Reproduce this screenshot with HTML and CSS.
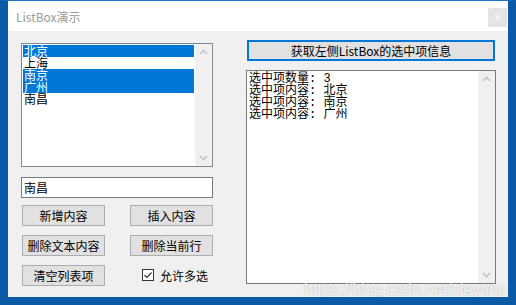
FILE: index.html
```html
<!DOCTYPE html>
<html lang="zh-cn">
<head>
    <meta charset="UTF-8">
    <meta name="viewport" content="width=device-width, initial-scale=1.0">
    <title>ListBox演示</title>
    <link rel="stylesheet" href="styles.css">
</head>
<body>
    <div class="window">
        <div class="titlebar">
            <span class="title">ListBox演示</span>
            <span class="close">x</span>
        </div>
        <div class="client">
            <div class="left">
                <div class="listbox">
                    <ul class="items">
                        <li class="sel">北京</li>
                        <li>上海</li>
                        <li class="sel">南京</li>
                        <li class="sel">广州</li>
                        <li>南昌</li>
                    </ul>
                    <div class="vscroll">
                        <svg width="17" height="17" viewBox="0 0 17 17"><polyline points="5,10 8.5,6.5 12,10" fill="none" stroke="#c2c2c2" stroke-width="1.6"/></svg>
                        <svg width="17" height="17" viewBox="0 0 17 17"><polyline points="5,7 8.5,10.5 12,7" fill="none" stroke="#c2c2c2" stroke-width="1.6"/></svg>
                    </div>
                </div>
                <div class="edit">南昌</div>
                <div class="btns">
                    <button class="btn">新增内容</button>
                    <button class="btn">插入内容</button>
                    <button class="btn">删除文本内容</button>
                    <button class="btn">删除当前行</button>
                    <button class="btn">清空列表项</button>
                    <label class="check">
                        <svg width="12" height="12" viewBox="0 0 12 12"><rect x="0.5" y="0.5" width="11" height="11" fill="#fff" stroke="#333"/><polyline points="2.5,6 5,8.5 9.5,3.5" fill="none" stroke="#333" stroke-width="1.2"/></svg>
                        <span>允许多选</span>
                    </label>
                </div>
            </div>
            <div class="right">
                <button class="btn btn-main">获取左侧ListBox的选中项信息</button>
                <div class="memo">
                    <div class="memo-text">
                        <div>选中项数量: 3</div>
                        <div>选中项内容: 北京</div>
                        <div>选中项内容: 南京</div>
                        <div>选中项内容: 广州</div>
                    </div>
                    <div class="vscroll">
                        <svg width="17" height="17" viewBox="0 0 17 17"><polyline points="5,10 8.5,6.5 12,10" fill="none" stroke="#c2c2c2" stroke-width="1.6"/></svg>
                        <svg width="17" height="17" viewBox="0 0 17 17"><polyline points="5,7 8.5,10.5 12,7" fill="none" stroke="#c2c2c2" stroke-width="1.6"/></svg>
                    </div>
                </div>
            </div>
        </div>
        <div class="watermark">https://blog.csdn.net/xieyunc</div>
    </div>
</body>
</html>
```
FILE: styles.css
```css
*{
    box-sizing: border-box;
}

body{
    margin: 0;
    font-family: "Noto Sans CJK SC", "Noto Sans", sans-serif;
    font-size: 12px;
}

.window{
    position: relative;
    width: 516px;
    height: 305px;
    border: 8px solid #0a5aa6;
    border-top: 1px solid #1c74c2;
    display: flex;
    flex-direction: column;
    overflow: hidden;
}

.titlebar{
    height: 30px;
    background-color: #fff;
    display: flex;
    justify-content: space-between;
    align-items: flex-start;
}

.title{
    color: #9a9a9a;
    margin: 9px 0 0 8px;
    line-height: 14px;
}

.close{
    width: 19px;
    height: 19px;
    margin: 7px 1px 0 0;
    background-color: #e4e4e4;
    color: #f6f6f6;
    font-family: "Liberation Sans", sans-serif;
    font-weight: bold;
    font-size: 11px;
    text-align: center;
    line-height: 18px;
}

.client{
    flex: 1;
    background-color: #f0f0f0;
    display: flex;
    gap: 33px;
    padding: 9px 12px 0 13px;
}

.left{
    width: 192px;
    padding-top: 3px;
}

.listbox{
    height: 124px;
    border: 1px solid #828790;
    background-color: #fff;
    display: flex;
}

.items{
    list-style: none;
    margin: 0;
    padding: 1px 1px 0 1px;
    flex: 1;
}

.items li{
    height: 12px;
    line-height: 12px;
    padding-left: 1px;
    color: #000;
}

.items li.sel{
    background-color: #0078d7;
    color: #fff;
}

.vscroll{
    width: 17px;
    background-color: #f0f0f0;
    display: flex;
    flex-direction: column;
    justify-content: space-between;
}

.vscroll svg{
    display: block;
}

.edit{
    margin-top: 10px;
    height: 21px;
    border: 1px solid #7a7a7a;
    background-color: #fff;
    padding-left: 2px;
    line-height: 19px;
}

.btns{
    display: grid;
    grid-template-columns: 83px 83px;
    column-gap: 25px;
    row-gap: 8px;
    margin: 7px 0 0 1px;
}

.btn{
    height: 21px;
    border: 1px solid #adadad;
    background-color: #e1e1e1;
    font-family: inherit;
    font-size: 12px;
    color: #000;
    padding: 0;
    line-height: 19px;
}

.btns .btn:nth-child(n+3){
    margin-top: 1px;
}

.check{
    display: flex;
    align-items: center;
    gap: 6px;
    padding-left: 12px;
    color: #000;
}

.right{
    width: 250px;
}

.btn-main{
    display: block;
    width: 248px;
    margin-left: 1px;
    border: 2px solid #0078d7;
    line-height: 17px;
}

.memo{
    margin-top: 9px;
    height: 214px;
    border: 1px solid #7a7a7a;
    background-color: #fff;
    display: flex;
}

.memo-text{
    flex: 1;
    padding: 2px 0 0 2px;
    line-height: 12px;
    font-family: "Liberation Mono", "Noto Sans CJK SC", monospace;
}

.watermark{
    position: absolute;
    right: 2px;
    bottom: -2px;
    font-family: "Liberation Sans", sans-serif;
    font-size: 16px;
    color: rgba(255, 255, 255, 0.75);
    text-shadow: 0 0 2px rgba(120, 120, 120, 0.5);
}
```
